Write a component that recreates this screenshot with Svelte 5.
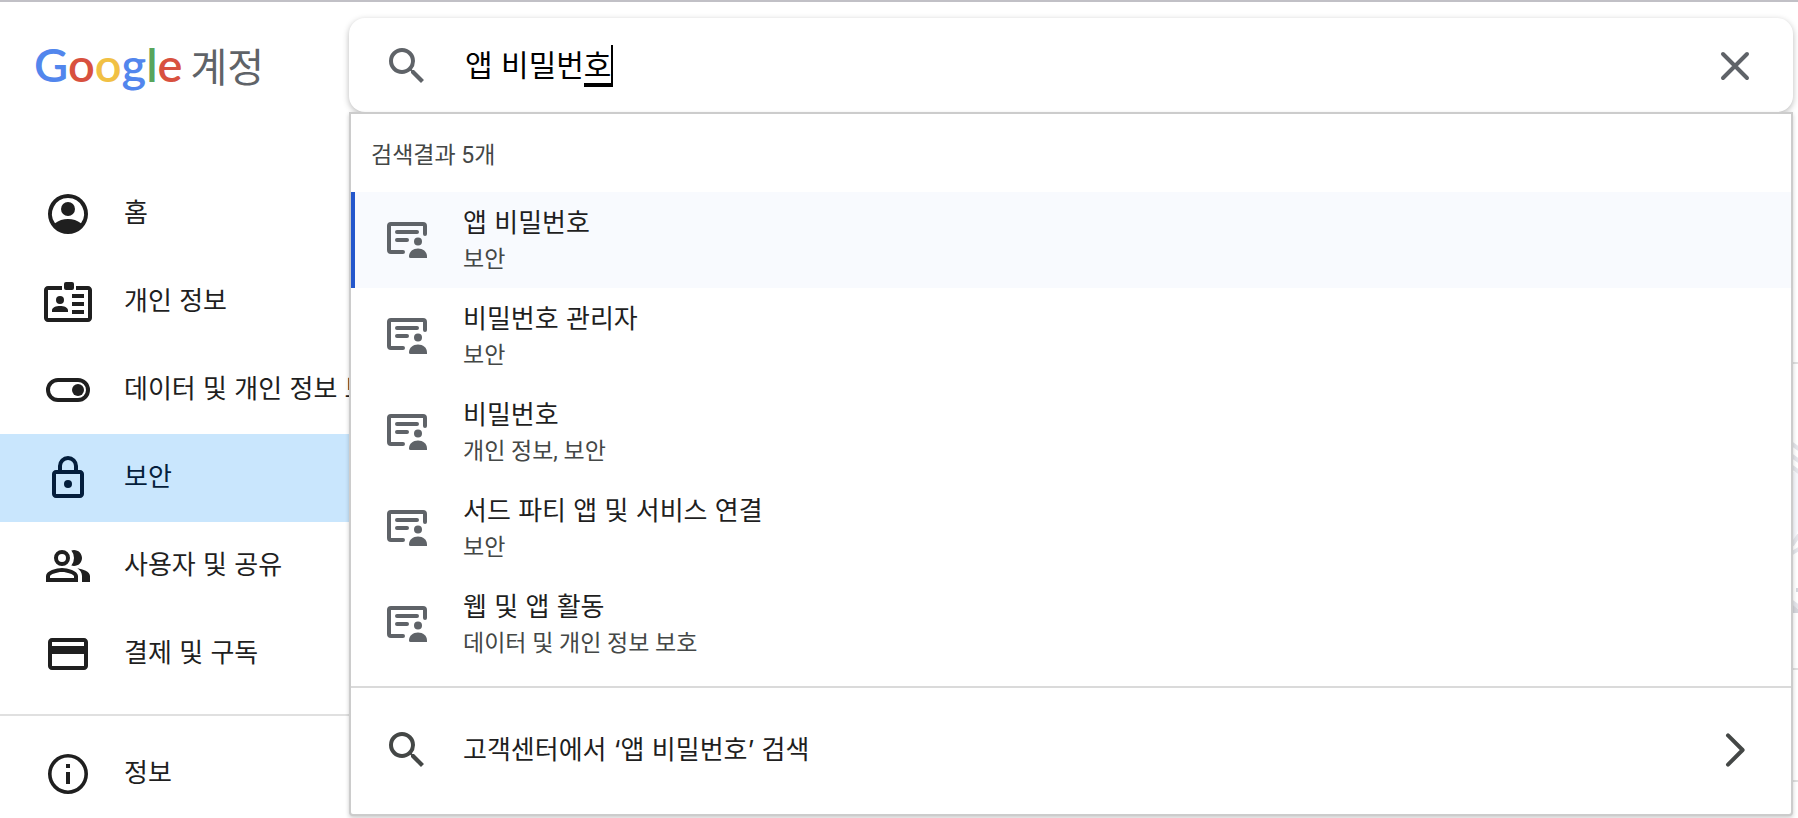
<script lang="ts">
	type NavItem = { id: string; label: string };
	type Result = { title: string; section: string };

	const navItems: NavItem[] = [
		{ id: 'home', label: '홈' },
		{ id: 'personal', label: '개인 정보' },
		{ id: 'data', label: '데이터 및 개인 정보 보호' },
		{ id: 'security', label: '보안' },
		{ id: 'people', label: '사용자 및 공유' },
		{ id: 'payments', label: '결제 및 구독' }
	];

	const results: Result[] = [
		{ title: '앱 비밀번호', section: '보안' },
		{ title: '비밀번호 관리자', section: '보안' },
		{ title: '비밀번호', section: '개인 정보, 보안' },
		{ title: '서드 파티 앱 및 서비스 연결', section: '보안' },
		{ title: '웹 및 앱 활동', section: '데이터 및 개인 정보 보호' }
	];

	const logo = [
		['G', 'blue'],
		['o', 'red'],
		['o', 'yellow'],
		['g', 'blue'],
		['l', 'green'],
		['e', 'red']
	];

	let current = $state('security');
	let selected = $state(0);
	let query = $state('앱 비밀번호');
	let committed = $derived(query.slice(0, -1));
	let composing = $derived(query.slice(-1));
</script>

{#snippet searchIcon()}
	<svg class="icon" viewBox="0 0 24 24" aria-hidden="true">
		<path
			d="M15.5 14h-.79l-.28-.27A6.471 6.471 0 0 0 16 9.5 6.5 6.5 0 1 0 9.5 16c1.61 0 3.09-.59 4.23-1.57l.27.28v.79l5 4.99L20.49 19l-4.99-5zm-6 0C7.01 14 5 11.99 5 9.5S7.01 5 9.5 5 14 7.01 14 9.5 11.99 14 9.5 14z"
		/>
	</svg>
{/snippet}

{#snippet navIcon(id: string)}
	<svg class="icon" viewBox="0 0 24 24" aria-hidden="true">
		{#if id === 'home'}
			<path
				fill-rule="evenodd"
				d="M12 2a10 10 0 1 0 0 20 10 10 0 0 0 0-20zm0 2a8 8 0 0 1 6.5 12.66C16.7 15.2 14.4 14.5 12 14.5s-4.7.7-6.5 2.16A8 8 0 0 1 12 4z"
			/>
			<circle cx="12" cy="9.5" r="3.5" />
		{:else if id === 'personal'}
			<path
				fill-rule="evenodd"
				d="M9 4H2C.9 4 0 4.9 0 6v14c0 1.1.9 2 2 2h20c1.1 0 2-.9 2-2V6c0-1.1-.9-2-2-2h-6v2h6v14H2V6h7z"
			/>
			<rect x="10" y="2" width="5" height="4" rx="1" />
			<circle cx="8" cy="11" r="2" />
			<path d="M4 17v-.8C4 14.7 6 14 8 14s4 .7 4 2.2v.8zM14 8h6v2h-6zM14 12h6v2h-6zM14 16h6v2h-6z" />
		{:else if id === 'data'}
			<path
				fill-rule="evenodd"
				d="M17 6H7a6 6 0 0 0 0 12h10a6 6 0 0 0 0-12zm0 10H7a4 4 0 0 1 0-8h10a4 4 0 0 1 0 8z"
			/>
			<circle cx="17" cy="12" r="3" />
		{:else if id === 'security'}
			<path
				fill-rule="evenodd"
				d="M18 8h-1V6A5 5 0 0 0 7 6v2H6c-1.1 0-2 .9-2 2v10c0 1.1.9 2 2 2h12c1.1 0 2-.9 2-2V10c0-1.1-.9-2-2-2zM9 6a3 3 0 0 1 6 0v2H9zm9 14H6V10h12z"
			/>
			<circle cx="12" cy="15" r="2" />
		{:else if id === 'people'}
			<path
				fill-rule="evenodd"
				d="M9 12a4 4 0 1 0 0-8 4 4 0 0 0 0 8zm0-6a2 2 0 1 1 0 4 2 2 0 0 1 0-4zM9 13c-2.67 0-8 1.34-8 4v3h16v-3c0-2.66-5.33-4-8-4zm6 5H3v-.99C3.2 16.29 6.3 15 9 15s5.8 1.29 6 2z"
			/>
			<path
				d="M16.67 13.13C18.04 14.06 19 15.32 19 17v3h4v-3c0-2.18-3.57-3.47-6.33-3.87zM15 12c2.21 0 4-1.79 4-4s-1.79-4-4-4c-.47 0-.91.1-1.33.24a5.98 5.98 0 0 1 0 7.52c.42.14.86.24 1.33.24z"
			/>
		{:else if id === 'payments'}
			<path
				fill-rule="evenodd"
				d="M20 4H4c-1.11 0-1.99.89-1.99 2L2 18c0 1.11.89 2 2 2h16c1.11 0 2-.89 2-2V6c0-1.11-.89-2-2-2zm0 14H4v-6h16zm0-10H4V6h16z"
			/>
		{:else}
			<path
				fill-rule="evenodd"
				d="M11 7h2v2h-2zm0 4h2v6h-2zm1-9a10 10 0 1 0 0 20 10 10 0 0 0 0-20zm0 18.2a8.2 8.2 0 1 1 0-16.4 8.2 8.2 0 0 1 0 16.4z"
			/>
		{/if}
	</svg>
{/snippet}

<div class="page">
	<div class="sidebar">
		<a class="brand" href="#home">
			<span class="wordmark"
				>{#each logo as [letter, color]}<span class={color}>{letter}</span>{/each}</span
			>
			<span class="product">계정</span>
		</a>
		<nav>
			{#each navItems as item}
				<a
					href="#{item.id}"
					class="nav-item"
					class:current={item.id === current}
					onclick={() => (current = item.id)}
				>
					{@render navIcon(item.id)}
					<span>{item.label}</span>
				</a>
			{/each}
			<hr />
			<a href="#about" class="nav-item">
				{@render navIcon('about')}
				<span>정보</span>
			</a>
		</nav>
	</div>

	<main>
		<form class="search-box" onsubmit={(e) => e.preventDefault()}>
			{@render searchIcon()}
			<div class="field">
				<input type="text" aria-label="Google 계정 검색" bind:value={query} />
				<div class="composition" aria-hidden="true">
					<span>{committed}</span><span class="composing">{composing}</span>
				</div>
			</div>
			<button type="button" class="clear" aria-label="검색어 지우기" onclick={() => (query = '')}>
				<svg class="icon" viewBox="0 0 24 24" aria-hidden="true">
					<path class="line" d="m6 6 12 12M18 6 6 18" />
				</svg>
			</button>
		</form>

		<div class="dropdown">
			<h2>검색결과 {results.length}개</h2>
			<ul>
				{#each results as result, index}
					<li>
						<a
							href="#result-{index}"
							class="result"
							class:selected={index === selected}
							onmouseenter={() => (selected = index)}
						>
							<svg class="icon" viewBox="0 0 24 24" aria-hidden="true">
								<path
									class="line"
									d="M10 18H4a1 1 0 0 1-1-1V5a1 1 0 0 1 1-1h16a1 1 0 0 1 1 1v4M7 8h10M7 12h5"
								/>
								<circle cx="17.5" cy="12.8" r="2" />
								<path d="M13 20.2C13 17.8 15 16.2 17.5 16.2S22 17.8 22 20.2V21h-8.2q-.8 0-.8-.8z" />
							</svg>
							<span class="result-text">
								<span class="title">{result.title}</span>
								<span class="section">{result.section}</span>
							</span>
						</a>
					</li>
				{/each}
			</ul>
			<a class="help" href="#help">
				{@render searchIcon()}
				<span class="title">고객센터에서 ‘앱 비밀번호’ 검색</span>
				<svg class="icon chevron" viewBox="0 0 24 24" aria-hidden="true">
					<path class="line" d="m8.5 4.7 7.3 7.3-7.3 7.3" />
				</svg>
			</a>
		</div>
	</main>

	<!-- edge of the card behind the results -->
	<div class="card-edge" aria-hidden="true">
		<svg viewBox="0 0 5 178">
			<path class="tint" d="M0 30h5v58l-5 14z" />
			<path class="arc" d="m-1 2 7 5M-1 14l7 5M-1 25l7 5M-1 103l7-10M-1 111l7-4M-1 160l7 5" />
			<path class="shade" d="M3 146h2v4H3zM0 163l5 4v4H0z" />
		</svg>
	</div>
</div>

<style>
	:global(body) {
		margin: 0;
		background: #fff;
	}

	.page {
		display: grid;
		grid-template-columns: 349px minmax(0, 1fr) 5px;
		border-top: 2px solid #c1c0c6;
		font-family: Inter, 'Noto Sans CJK KR', sans-serif;
		font-size: 26px;
		line-height: 36px;
		color: #1f1f1f;
	}

	a {
		color: inherit;
		text-decoration: none;
	}

	.icon {
		width: 48px;
		height: 48px;
		flex: none;
		display: block;
		fill: currentColor;
	}

	.icon .line {
		fill: none;
		stroke: currentColor;
		stroke-width: 2;
		stroke-linecap: round;
		stroke-linejoin: round;
	}

	.brand {
		display: flex;
		align-items: baseline;
		gap: 8px;
		height: 138px;
		padding: 30px 0 0 34px;
		line-height: 64px;
	}

	.wordmark {
		font-family: Lato, sans-serif;
		font-size: 47px;
		font-weight: 600;
	}

	.blue {
		color: #5286ed;
	}

	.red {
		color: #d8513f;
	}

	.yellow {
		color: #f1c044;
	}

	.green {
		color: #58a55c;
	}

	.product {
		font-size: 40px;
		color: #5f6368;
	}

	.nav-item {
		display: flex;
		align-items: center;
		gap: 32px;
		height: 88px;
		padding-left: 44px;
		white-space: nowrap;
	}

	.nav-item span {
		padding-bottom: 2px;
	}

	.nav-item.current {
		background: #c9e6fd;
		color: #041e3c;
	}

	hr {
		margin: 16px 0 14px;
		border: 0;
		border-top: 2px solid #e0e0e0;
	}

	main {
		padding-top: 16px;
	}

	.search-box {
		display: flex;
		align-items: center;
		gap: 34px;
		box-sizing: border-box;
		height: 94px;
		padding: 2px 34px 0;
		border-radius: 16px;
		background: #fff;
		box-shadow: 0 2px 6px rgba(0, 0, 0, 0.28);
		color: #5f6368;
	}

	.field {
		position: relative;
		flex: 1;
		padding-bottom: 2px;
		font-size: 30px;
		line-height: 40px;
	}

	input {
		display: block;
		box-sizing: border-box;
		width: 100%;
		height: 40px;
		padding: 0;
		border: 0;
		outline: none;
		background: none;
		font: inherit;
		color: #000;
	}

	/* underline and caret of the syllable being typed */
	.composition {
		position: absolute;
		inset: 0;
		display: flex;
		white-space: pre;
		color: transparent;
		pointer-events: none;
	}

	.composing {
		box-sizing: border-box;
		height: 42px;
		border: solid #000;
		border-width: 0 2px 4px 0;
	}

	.clear {
		padding: 0;
		border: 0;
		background: none;
		color: inherit;
		cursor: pointer;
	}

	.dropdown {
		position: relative;
		border: 2px solid #ccc;
		border-radius: 0 0 4px 4px;
		background: #fff;
		box-shadow: 0 2px 4px rgba(0, 0, 0, 0.2);
	}

	h2 {
		margin: 0;
		padding: 6px 20px 0;
		font-family: Roboto, 'Noto Sans CJK KR', sans-serif;
		font-size: 23px;
		font-weight: 400;
		line-height: 72px;
		color: #444746;
	}

	ul {
		margin: 0;
		padding: 0 0 14px;
		list-style: none;
	}

	.result {
		display: flex;
		align-items: center;
		gap: 32px;
		height: 96px;
		padding: 0 28px;
		border-left: 4px solid transparent;
	}

	.result.selected {
		border-left-color: #2457cc;
		background: #f8fafe;
	}

	.result .icon {
		color: #5f6368;
	}

	.result-text {
		display: flex;
		flex-direction: column;
		gap: 1px;
		padding-top: 3px;
	}

	.title {
		color: #1f1f1f;
	}

	.section {
		font-family: Roboto, 'Noto Sans CJK KR', sans-serif;
		font-size: 23px;
		color: #444746;
	}

	.help {
		display: flex;
		align-items: center;
		gap: 32px;
		height: 124px;
		padding: 0 32px 2px;
		border-top: 2px solid #dadada;
		color: #444746;
	}

	.chevron {
		margin-left: auto;
	}

	.card-edge {
		padding-top: 360px;
	}

	.card-edge svg {
		display: block;
		width: 100%;
		height: 178px;
		padding: 78px 0 48px;
		border: solid #e0e0e0;
		border-width: 2px 0;
	}

	.card-edge::after {
		content: '';
		display: block;
		height: 110px;
		border-bottom: 2px solid #e0e0e0;
	}

	.tint {
		fill: #f6f7fb;
	}

	.arc {
		fill: none;
		stroke: #e4e5ea;
		stroke-width: 4;
	}

	.shade {
		fill: #d5d6dc;
	}
</style>
